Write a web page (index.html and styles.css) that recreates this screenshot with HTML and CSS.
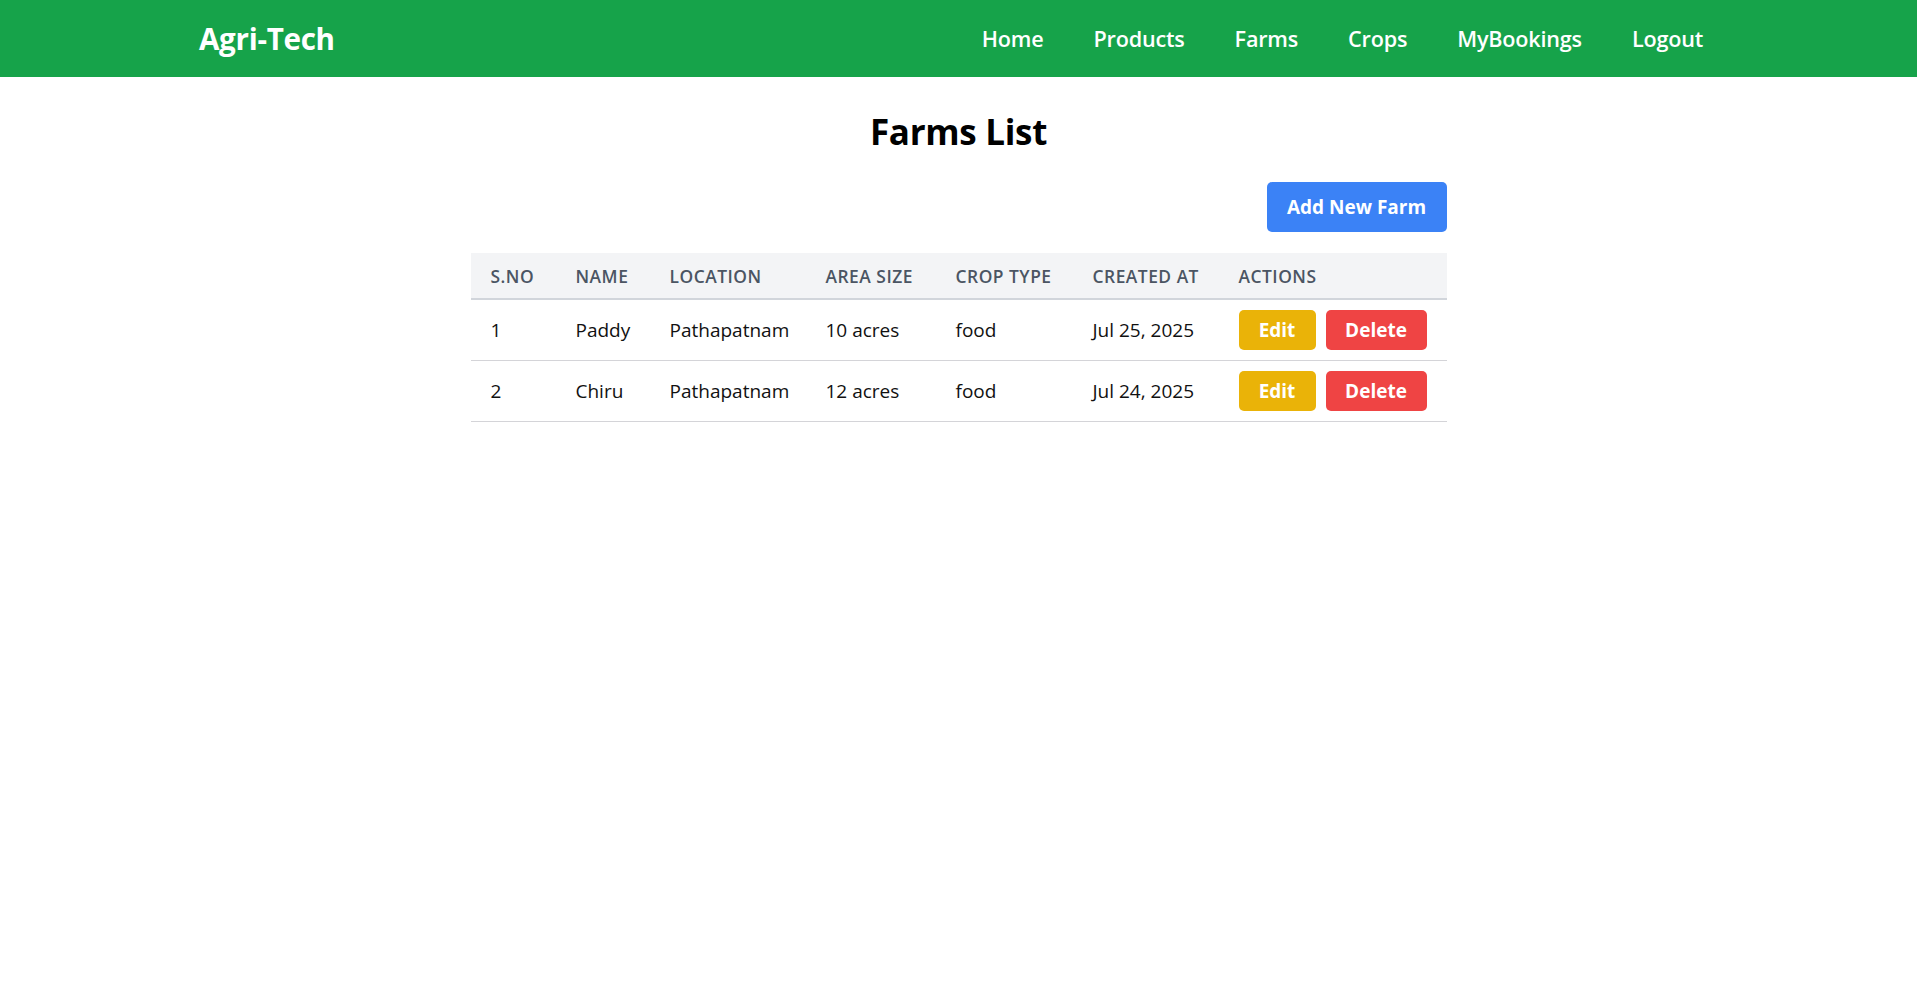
FILE: index.html
```html
<!DOCTYPE html>
<html lang="en">
<head>
<meta charset="utf-8">
<title>Agri-Tech - Farms List</title>
<link rel="stylesheet" href="styles.css">
</head>
<body>
<nav class="navbar">
  <div class="nav-inner">
    <a class="brand" href="#">Agri-Tech</a>
    <ul class="nav-links">
      <li><a href="#">Home</a></li>
      <li><a href="#">Products</a></li>
      <li><a href="#">Farms</a></li>
      <li><a href="#">Crops</a></li>
      <li><a href="#">MyBookings</a></li>
      <li><a href="#">Logout</a></li>
    </ul>
  </div>
</nav>
<main class="page">
  <h1 class="page-title">Farms List</h1>
  <div class="toolbar">
    <button class="btn btn-add">Add New Farm</button>
  </div>
  <table class="farms">
    <colgroup>
      <col class="c-sno"><col class="c-name"><col class="c-loc"><col class="c-area"><col class="c-crop"><col class="c-date"><col class="c-act">
    </colgroup>
    <thead>
      <tr>
        <th>S.No</th><th>Name</th><th>Location</th><th>Area Size</th><th>Crop Type</th><th>Created At</th><th>Actions</th>
      </tr>
    </thead>
    <tbody>
      <tr>
        <td>1</td><td>Paddy</td><td>Pathapatnam</td><td>10 acres</td><td>food</td><td>Jul 25, 2025</td>
        <td><div class="actions"><button class="btn btn-edit">Edit</button><button class="btn btn-delete">Delete</button></div></td>
      </tr>
      <tr>
        <td>2</td><td>Chiru</td><td>Pathapatnam</td><td>12 acres</td><td>food</td><td>Jul 24, 2025</td>
        <td><div class="actions"><button class="btn btn-edit">Edit</button><button class="btn btn-delete">Delete</button></div></td>
      </tr>
    </tbody>
  </table>
</main>
</body>
</html>
```

FILE: styles.css
```css
* { box-sizing: border-box; }

body {
  margin: 0;
  font-family: "Open Sans", "Noto Sans", sans-serif;
  color: #111;
  background: #fff;
}

.navbar {
  background: #16a34a;
  height: 77px;
}

.nav-inner {
  height: 100%;
  display: flex;
  align-items: center;
  justify-content: space-between;
  padding: 0 214px 0 199px;
}

.brand {
  color: #fff;
  text-decoration: none;
  font-size: 29.6px;
  font-weight: 700;
  letter-spacing: -0.3px;
}

.nav-links {
  list-style: none;
  margin: 0;
  padding: 0;
  display: flex;
  gap: 50px;
}

.nav-links a {
  color: #fff;
  text-decoration: none;
  font-size: 21.6px;
  font-weight: 600;
  letter-spacing: -0.2px;
}

.page {
  width: 976px;
  margin: 0 auto;
  padding-top: 32px;
}

.page-title {
  margin: 0 0 28px;
  text-align: center;
  font-size: 35px;
  line-height: 45px;
  font-weight: 700;
  color: #000;
  letter-spacing: -0.3px;
}

.toolbar {
  display: flex;
  justify-content: flex-end;
  margin-bottom: 21px;
}

.btn {
  border: 0;
  color: #fff;
  font-family: inherit;
  font-weight: 700;
  border-radius: 5px;
  cursor: pointer;
}

.btn-add {
  height: 50px;
  width: 180px;
  padding: 0;
  font-size: 19px;
  background: #3b82f6;
}

.farms {
  width: 100%;
  border-collapse: collapse;
  table-layout: fixed;
}

.c-sno { width: 85px; }
.c-name { width: 94px; }
.c-loc { width: 156px; }
.c-area { width: 130px; }
.c-crop { width: 137px; }
.c-date { width: 146px; }
.c-act { width: 228px; }

.farms thead tr {
  background: #f3f4f6;
  border-bottom: 2px solid #d1d5db;
}

.farms th {
  height: 46px;
  padding: 0 20px;
  text-align: left;
  text-transform: uppercase;
  font-size: 17.4px;
  font-weight: 600;
  letter-spacing: 0.5px;
  color: #4b5563;
  white-space: nowrap;
}

.farms tbody tr {
  border-bottom: 1px solid #d4d4d8;
}

.farms td {
  height: 61px;
  padding: 0 20px;
  font-size: 19px;
  color: #111;
  white-space: nowrap;
}

.actions {
  display: flex;
  gap: 10px;
}

.btn-edit,
.btn-delete {
  height: 40px;
  padding: 0;
  font-size: 19px;
}

.btn-edit {
  width: 77px;
  background: #eab308;
}

.btn-delete {
  width: 101px;
  background: #ef4444;
}
```
